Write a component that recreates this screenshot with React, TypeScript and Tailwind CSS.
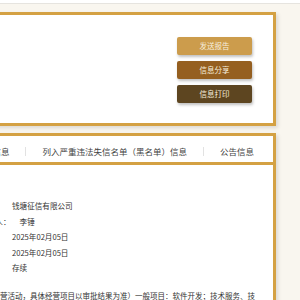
const buttons = [
  { label: "发送报告", className: "bg-[#cc9c4c]" },
  { label: "信息分享", className: "bg-[#955f20]" },
  { label: "信息打印", className: "bg-[#5d4520]" },
];

const tabs = ["行政处罚信息", "列入严重违法失信名单（黑名单）信息", "公告信息"];

const rows = [
  { label: "企业名称：", value: "钱塘征信有限公司" },
  { label: "法定代表人：", value: "李锤" },
  { label: "成立日期：", value: "2025年02月05日" },
  { label: "核准日期：", value: "2025年02月05日" },
  { label: "登记状态：", value: "存续" },
];

export default function App() {
  return (
    <div className="min-h-screen overflow-hidden bg-[#f9f6ef] font-['Noto_Sans_CJK_SC',sans-serif]">
      <div className="h-[4px] bg-white border-b border-[#e6e4df]" />

      <div className="ml-[-100px] w-[376px] pt-[8px]">
        {/* top card with actions */}
        <div className="h-[114px] border-[3px] border-[#d4a143] bg-white shadow-[2px_2px_4px_rgba(0,0,0,0.12)] flex items-center justify-end pr-[21px] pt-[2px]">
          <div className="flex flex-col gap-[6px] w-[75px]">
            {buttons.map((b) => (
              <div
                key={b.label}
                className={`${b.className} h-[18px] rounded-[2px] flex items-center justify-center text-[7.5px] text-[#f6eedc] shadow-[1px_2px_3px_rgba(0,0,0,0.25)]`}
              >
                {b.label}
              </div>
            ))}
          </div>
        </div>

        {/* detail card */}
        <div className="mt-[7px] border-[3px] border-b-0 border-[#d4a143] bg-white shadow-[2px_2px_4px_rgba(0,0,0,0.12)]">
          <div className="h-[29px] pt-[4px] flex items-center justify-end gap-[16px] pr-[19px] text-[8.5px] text-[#444] border-b-[3px] border-[#d4a143] whitespace-nowrap">
            {tabs.map((t, i) => (
              <div key={t} className="flex items-center gap-[16px]">
                {i > 0 && <div className="w-px h-[9px] bg-[#e2e2e2]" />}
                <span>{t}</span>
              </div>
            ))}
          </div>

          <div className="pl-[62px] pr-[12px] pt-[33px] pb-[20px] text-[#333]">
            <div className="flex flex-col text-[7.6px] leading-[15.5px]">
              {rows.map((r) => (
                <div key={r.label} className="flex whitespace-nowrap">
                  <span>{r.label}</span>
                  <span className="ml-[9px]">{r.value}</span>
                </div>
              ))}
            </div>
            <p className="mt-[12px] ml-[5px] text-[7.5px] leading-[15px] break-all">
              可开展经营活动，具体经营项目以审批结果为准）一般项目：软件开发；技术服务、技术开发、技术咨询、技术交流、技术转让、技术推广；信息咨询服务（不含许可类信息咨询服务）。
            </p>
          </div>
        </div>
      </div>
    </div>
  );
}
